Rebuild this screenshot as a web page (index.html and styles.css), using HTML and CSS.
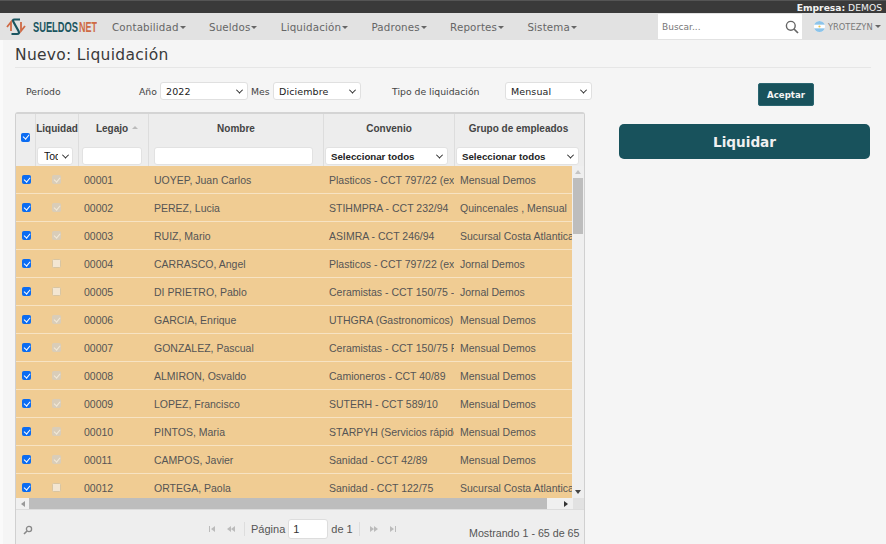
FILE: index.html
```html
<!DOCTYPE html>
<html lang="es">
<head>
<meta charset="utf-8">
<title>Nuevo: Liquidación</title>
<link rel="stylesheet" href="styles.css">
</head>
<body>
<div class="topbar"><b>Empresa:</b>&nbsp;DEMOS</div>
<nav class="nav">
  <div class="brand">
    <svg class="logo" width="20" height="18" viewBox="0 0 20 18"><path d="M1 9 L5 4 L5 13" fill="none" stroke="#cf6a45" stroke-width="1.8"/><path d="M19 8 L15 13 L15 4" fill="none" stroke="#cf6a45" stroke-width="1.8"/><path d="M14 1.5 L8.5 1.5 Q6 1.5 7.5 4 L12.5 13 Q14 16 11 16 L5.5 16" fill="none" stroke="#1a5560" stroke-width="2.2"/></svg>
    <span class="brand-a">SUELDOS</span><span class="brand-b">NET</span>
  </div>
  <ul class="menu">
    <li>Contabilidad<i class="caret"></i></li>
    <li>Sueldos<i class="caret"></i></li>
    <li>Liquidación<i class="caret"></i></li>
    <li>Padrones<i class="caret"></i></li>
    <li>Reportes<i class="caret"></i></li>
    <li>Sistema<i class="caret"></i></li>
  </ul>
  <div class="search">
    <span>Buscar...</span>
    <svg width="14" height="14" viewBox="0 0 14 14"><circle cx="5.8" cy="5.8" r="4.4" fill="none" stroke="#666" stroke-width="1.4"/><path d="M9 9 L13 13" stroke="#666" stroke-width="1.7"/></svg>
  </div>
  <div class="user">
    <svg width="11" height="11" viewBox="0 0 12 12"><clipPath id="c"><circle cx="6" cy="6" r="6"/></clipPath><g clip-path="url(#c)"><rect width="12" height="12" fill="#fff"/><rect width="12" height="4" fill="#8cc4ea"/><rect y="8" width="12" height="4" fill="#8cc4ea"/><circle cx="6" cy="6" r="1.2" fill="#e8c14a"/></g></svg>
    <span>YROTEZYN</span><i class="caret"></i>
  </div>
</nav>
<main class="page">
  <h1 class="title">Nuevo: Liquidación</h1>
  <div class="columns">
    <section class="left">
      <div class="filters">
        <span class="lbl-periodo">Período</span>
        <span class="lbl-anio">Año</span>
        <div class="sel sel-anio">2022<i class="chev"></i></div>
        <span class="lbl-mes">Mes</span>
        <div class="sel sel-mes">Diciembre<i class="chev"></i></div>
        <span class="lbl-tipo">Tipo de liquidación</span>
        <div class="sel sel-tipo">Mensual<i class="chev"></i></div>
      </div>
      <div class="grid">
        <div class="ghead">
          <div class="hc c0h hcheck"><i class="cb on"></i></div>
          <div class="hc c1"><b class="hl">Liquidad</b><div class="fsel tod"><span>Tod</span><i class="chev"></i></div></div>
          <div class="hc c2"><b class="hl hl-leg">Legajo<i class="sort"></i></b><div class="finput f-leg"></div></div>
          <div class="hc c3"><b class="hl">Nombre</b><div class="finput f-nom"></div></div>
          <div class="hc c4"><b class="hl">Convenio</b><div class="fsel f-all"><span>Seleccionar todos</span><i class="chev"></i></div></div>
          <div class="hc c5h"><b class="hl hl-gru">Grupo de empleados</b><div class="fsel f-all"><span>Seleccionar todos</span><i class="chev"></i></div></div>
        </div>
        <div class="gbody">
          <div class="rows">
            <div class="row"><div class="c0"><i class="cb on"></i></div><div class="c1"><i class="cb dis on"></i></div><div class="c2">00001</div><div class="c3">UOYEP, Juan Carlos</div><div class="c4">Plasticos - CCT 797/22 (ex CCT 419/05)</div><div class="c5">Mensual Demos</div></div>
            <div class="row"><div class="c0"><i class="cb on"></i></div><div class="c1"><i class="cb dis on"></i></div><div class="c2">00002</div><div class="c3">PEREZ, Lucia</div><div class="c4">STIHMPRA - CCT 232/94</div><div class="c5">Quincenales , Mensual</div></div>
            <div class="row"><div class="c0"><i class="cb on"></i></div><div class="c1"><i class="cb dis on"></i></div><div class="c2">00003</div><div class="c3">RUIZ, Mario</div><div class="c4">ASIMRA - CCT 246/94</div><div class="c5">Sucursal Costa Atlantica</div></div>
            <div class="row"><div class="c0"><i class="cb on"></i></div><div class="c1"><i class="cb dis"></i></div><div class="c2">00004</div><div class="c3">CARRASCO, Angel</div><div class="c4">Plasticos - CCT 797/22 (ex CCT 419/05)</div><div class="c5">Jornal Demos</div></div>
            <div class="row"><div class="c0"><i class="cb on"></i></div><div class="c1"><i class="cb dis"></i></div><div class="c2">00005</div><div class="c3">DI PRIETRO, Pablo</div><div class="c4">Ceramistas - CCT 150/75 - Rama</div><div class="c5">Jornal Demos</div></div>
            <div class="row"><div class="c0"><i class="cb on"></i></div><div class="c1"><i class="cb dis on"></i></div><div class="c2">00006</div><div class="c3">GARCIA, Enrique</div><div class="c4">UTHGRA (Gastronomicos) - CCT</div><div class="c5">Mensual Demos</div></div>
            <div class="row"><div class="c0"><i class="cb on"></i></div><div class="c1"><i class="cb dis on"></i></div><div class="c2">00007</div><div class="c3">GONZALEZ, Pascual</div><div class="c4">Ceramistas - CCT 150/75 Rama</div><div class="c5">Mensual Demos</div></div>
            <div class="row"><div class="c0"><i class="cb on"></i></div><div class="c1"><i class="cb dis on"></i></div><div class="c2">00008</div><div class="c3">ALMIRON, Osvaldo</div><div class="c4">Camioneros - CCT 40/89</div><div class="c5">Mensual Demos</div></div>
            <div class="row"><div class="c0"><i class="cb on"></i></div><div class="c1"><i class="cb dis on"></i></div><div class="c2">00009</div><div class="c3">LOPEZ, Francisco</div><div class="c4">SUTERH - CCT 589/10</div><div class="c5">Mensual Demos</div></div>
            <div class="row"><div class="c0"><i class="cb on"></i></div><div class="c1"><i class="cb dis on"></i></div><div class="c2">00010</div><div class="c3">PINTOS, Maria</div><div class="c4">STARPYH (Servicios rápidos)</div><div class="c5">Mensual Demos</div></div>
            <div class="row"><div class="c0"><i class="cb on"></i></div><div class="c1"><i class="cb dis on"></i></div><div class="c2">00011</div><div class="c3">CAMPOS, Javier</div><div class="c4">Sanidad - CCT 42/89</div><div class="c5">Mensual Demos</div></div>
            <div class="row"><div class="c0"><i class="cb on"></i></div><div class="c1"><i class="cb dis"></i></div><div class="c2">00012</div><div class="c3">ORTEGA, Paola</div><div class="c4">Sanidad - CCT 122/75</div><div class="c5">Sucursal Costa Atlantica</div></div>
          </div>
          <div class="vscroll">
            <i class="arr up"></i>
            <div class="vtrack"><div class="vthumb"></div></div>
            <i class="arr down"></i>
          </div>
        </div>
        <div class="hscroll">
          <i class="arr left-a"></i>
          <div class="hthumb"></div>
          <i class="arr right-a"></i>
          <div class="corner"></div>
        </div>
        <div class="pager">
          <svg class="zoomi" width="10" height="10" viewBox="0 0 10 10"><circle cx="6" cy="4" r="2.6" fill="none" stroke="#888" stroke-width="1.3"/><path d="M4 6 L1 9" stroke="#888" stroke-width="1.6"/></svg>
          <div class="pg-center">
            <svg class="pgi" width="10" height="6" viewBox="0 0 10 6"><path d="M1 0 V6 H2 V0Z M7 0 L3 3 L7 6Z" fill="#bbb"/></svg>
            <svg class="pgi" width="10" height="6" viewBox="0 0 10 6"><path d="M5 0 L1 3 L5 6Z M9 0 L5 3 L9 6Z" fill="#bbb"/></svg>
            <i class="sep"></i>
            <span class="pg-txt">Página</span><div class="pg-input">1</div><span class="pg-txt">de 1</span>
            <i class="sep"></i>
            <svg class="pgi" width="10" height="6" viewBox="0 0 10 6"><path d="M1 0 L5 3 L1 6Z M5 0 L9 3 L5 6Z" fill="#bbb"/></svg>
            <svg class="pgi" width="10" height="6" viewBox="0 0 10 6"><path d="M3 0 L7 3 L3 6Z M8 0 V6 H9 V0Z" fill="#bbb"/></svg>
          </div>
          <span class="pg-info">Mostrando 1 - 65 de 65</span>
        </div>
      </div>
    </section>
    <aside class="right">
      <button class="btn-ok">Aceptar</button>
      <button class="btn-liq">Liquidar</button>
    </aside>
  </div>
</main>
</body>
</html>
```
FILE: styles.css
```css
* { box-sizing: border-box; }
html, body { margin: 0; height: 544px; overflow: hidden; }
body { background: #f5f5f5; font-family: "DejaVu Sans", sans-serif; color: #333; }
.topbar { height: 13px; background: #3a3a3a; color: #f2f2f2; font-size: 9.2px; line-height: 14px; text-align: right; padding-right: 4px; border-top: 1px solid #555; }
.nav { height: 27px; background: #e2e2e2; display: flex; align-items: center; }
.brand { width: 105px; display: flex; align-items: center; padding-left: 6px; flex: none; font-family: "Liberation Sans", sans-serif; font-weight: 700; font-size: 15px; white-space: nowrap; }
.logo { flex: none; margin-right: 7px; }
.brand-a { color: #1a5560; transform: scaleX(.62); transform-origin: left; width: 45.5px; flex: none; }
.brand-b { color: #cf6a45; transform: scaleX(.6); transform-origin: left; flex: none; }
.menu { list-style: none; margin: 0; padding: 0 0 0 7px; display: flex; gap: 23.3px; font-size: 10.3px; color: #666; letter-spacing: .15px; width: 553px; flex: none; }
.menu li { white-space: nowrap; }
.caret { display: inline-block; width: 0; height: 0; border: 3px solid transparent; border-top: 3.5px solid #666; border-bottom: 0; margin-left: 1px; vertical-align: 2px; }
.search { width: 144px; height: 25px; background: #fff; display: flex; align-items: center; justify-content: space-between; padding: 0 3px 0 4px; font-size: 9px; color: #777; flex: none; }
.user { flex: 1; display: flex; align-items: center; font-size: 8.3px; color: #777; padding-left: 12px; gap: 3px; white-space: nowrap; }
.user .caret { margin-left: -1px; vertical-align: 0; }
.page { padding: 0 15px 0 12px; border-left: 3px solid #fafafa; }
.title { margin: 0; font-weight: 400; font-size: 15.5px; height: 28px; line-height: 31px; color: #3a3a3a; border-bottom: 1px solid #e6e6e6; letter-spacing: .3px; }
.columns { display: flex; }
.left { width: 577px; flex: none; }
.filters { height: 44px; display: flex; align-items: center; font-size: 9.3px; color: #444; padding-top: 2px; }
.lbl-periodo { margin-left: 11px; width: 113px; }
.lbl-anio { width: 21px; }
.lbl-mes { width: 25px; padding-left: 3px; }
.lbl-tipo { margin-left: 31px; width: 113px; }
.sel { height: 18px; background: #fff; border: 1px solid #e0e0e0; border-radius: 3px; display: flex; align-items: center; justify-content: space-between; padding: 0 5px; font-size: 9.5px; color: #222; letter-spacing: .1px; }
.sel-anio { width: 88px; }
.sel-mes { width: 88px; }
.sel-tipo { width: 87px; }
.chev { display: inline-block; width: 5px; height: 5px; border-right: 1.3px solid #222; border-bottom: 1.3px solid #222; transform: rotate(45deg) translate(-1px, -1px); flex: none; }
.grid { width: 570px; height: 434px; border: 1px solid #d0d0d0; border-top: 2px solid #d4d4d4; border-radius: 3px 3px 0 0; background: #eee; font-family: "Liberation Sans", sans-serif; display: flex; flex-direction: column; }
.ghead { display: flex; height: 52px; flex: none; }
.hc { background: #ededed; border-right: 1px solid #ddd; display: flex; flex-direction: column; align-items: center; padding-top: 8px; }
.hc:last-child { border-right: 0; }
.hcheck { justify-content: center; padding: 0 0 6px; }
.hl { font-size: 10px; color: #444; height: 25px; line-height: 13px; white-space: nowrap; display: block; }
.hl-leg { margin-left: 7px; }
.hl-gru { margin-right: 2px; }
.c0h { width: 20px; flex: none; }
.c0 { width: 19px; flex: none; }
.c1 { width: 43px; flex: none; }
.c2 { width: 70px; flex: none; }
.c3 { width: 175px; flex: none; }
.c4 { width: 131px; flex: none; }
.c5 { width: 130px; flex: none; }
.c5h { width: 129px; flex: none; }
.sort { display: inline-block; width: 0; height: 0; margin-left: 4px; border: 3px solid transparent; border-bottom: 3px solid #bbb; border-top: 0; vertical-align: 3px; }
.finput, .fsel { background: #fff; height: 18px; border: 1px solid #e2e2e2; border-radius: 3px; }
.f-leg { width: 60px; align-self: flex-start; margin-left: 3px; }
.f-nom { width: 159px; align-self: flex-start; margin-left: 5px; }
.f-all { width: 123px; align-self: flex-start; margin-left: 1px; }
.fsel { display: flex; align-items: center; justify-content: space-between; padding: 0 5px; font-size: 9.7px; font-weight: 700; color: #222; white-space: nowrap; overflow: hidden; }
.fsel.tod { width: 36px; font-weight: 400; color: #111; font-size: 10.5px; padding: 0 4px 0 6px; align-self: flex-start; margin-left: 1px; }
.tod span { width: 14px; overflow: hidden; }
.cb { display: block; width: 9px; height: 9px; border-radius: 1.5px; position: relative; background: #f3e6d2; border: 1px solid #d8c5a2; flex: none; }
.cb.on { background: #0b6cf2; border-color: #0b6cf2; }
.cb.on::after { content: ""; position: absolute; left: 1.6px; top: -.4px; width: 2.8px; height: 5.4px; border-right: 1.5px solid #fff; border-bottom: 1.5px solid #fff; transform: rotate(40deg); }
.cb.dis.on { background: #d9cdb9; border-color: #d9cdb9; }
.cb.dis.on::after { border-color: #f3ead9; }
.gbody { display: flex; height: 332px; flex: none; }
.rows { width: 556px; flex: none; overflow: hidden; background: #f0cc93; }
.row { display: flex; height: 28px; align-items: center; background: #f0cc93; border-bottom: 1px solid #f7e3c3; font-size: 10.5px; color: #555; white-space: nowrap; }
.row > div { overflow: hidden; padding-left: 6px; }
.row .c0, .row .c1 { padding-left: 0; display: flex; justify-content: center; align-items: center; }
.row .c0 { justify-content: flex-start; padding-left: 6px; }
.vscroll { flex: 1; background: #efefef; display: flex; flex-direction: column; align-items: center; }
.vtrack { flex: 1; width: 100%; padding: 0 1px; }
.vthumb { height: 56px; background: #bdbdbd; }
.arr { display: block; width: 0; height: 0; border: 3px solid transparent; flex: none; }
.arr.up { border-bottom: 4px solid #c4c4c4; border-top: 0; margin: 4px 0; }
.arr.down { border-top: 4px solid #444; border-bottom: 0; margin: 4px 0; }
.hscroll { display: flex; height: 11px; align-items: center; background: #f0f0f0; flex: none; }
.arr.left-a { border-right: 4px solid #999; border-left: 0; margin: 0 4px 0 5px; }
.hthumb { width: 518px; flex: none; height: 100%; background: #bdbdbd; }
.arr.right-a { border-left: 4px solid #333; border-right: 0; margin: 0 5px 0 17px; }
.corner { flex: 1; height: 100%; background: #e2e2e2; }
.pager { flex: 1; display: flex; align-items: flex-start; background: #eee; border-top: 1px solid #ddd; font-size: 11px; color: #555; padding-top: 9px; }
.zoomi { margin: 6px 0 0 7px; flex: none; }
.pg-center { display: flex; align-items: center; gap: 3px; margin-left: 175px; width: 258px; flex: none; }
.pgi { flex: none; margin-right: 5px; }
.sep { width: 1px; height: 14px; background: #ddd; flex: none; margin: 0 3px 0 0; }
.pg-txt { white-space: nowrap; font-size: 11px; color: #555; }
.pg-input { width: 40px; height: 20px; background: #fff; border: 1px solid #ddd; border-radius: 3px; color: #333; padding: 3px 4px; font-size: 11px; }
.pg-txt + .sep { margin-left: 3px; margin-right: 6px; }
.pg-info { font-size: 10.7px; color: #555; padding-top: 8px; margin-left: 3px; white-space: nowrap; }
.right { flex: 1; display: flex; flex-direction: column; align-items: flex-start; padding: 15px 0 0 27px; }
.btn-ok { width: 56px; height: 23px; margin-left: 139px; background: #18525c; color: #f4f4f4; border: 1px solid #2a6570; border-radius: 2px; font-family: "DejaVu Sans", sans-serif; font-size: 8.6px; font-weight: 700; padding: 0; }
.btn-liq { width: 251px; height: 35px; margin-top: 18px; background: #18525c; color: #f0f0f0; border: 0; border-radius: 5px; font-family: "DejaVu Sans", sans-serif; font-size: 13.6px; font-weight: 700; padding: 0; }
```
